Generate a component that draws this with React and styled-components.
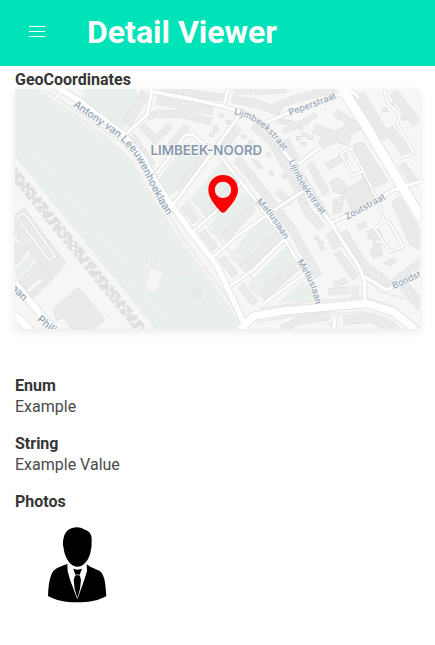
import React from "react";
import styled, { createGlobalStyle } from "styled-components";

const GlobalStyle = createGlobalStyle`
  *, *::before, *::after { box-sizing: border-box; }
  body {
    margin: 0;
    background: #ffffff;
    color: #4a4a4a;
    font-family: Roboto, "Liberation Sans", sans-serif;
    font-size: 16px;
    line-height: 21px;
  }
`;

const Header = styled.header`
  display: flex;
  align-items: center;
  height: 66px;
  padding: 0 25px 2px;
  gap: 38px;
  background: #00e2b7;
  color: #ffffff;
`;

const MenuButton = styled.button`
  display: flex;
  flex-direction: column;
  align-items: center;
  justify-content: center;
  gap: 4px;
  width: 24px;
  height: 24px;
  padding: 0 0 2px;
  border: 0;
  background: transparent;
  color: inherit;
  cursor: pointer;
`;

const MenuLine = styled.span`
  width: 16px;
  height: 1px;
  background: currentColor;
`;

const Title = styled.h1`
  margin: 0;
  font-size: 32px;
  font-weight: 700;
  line-height: 36px;
`;

const Content = styled.main`
  padding: 4px 15px 24px;
`;

const Field = styled.section`
  margin-bottom: ${(p) => (p.$spacious ? 46 : 16)}px;
`;

const Label = styled.h2`
  margin: 0;
  color: #363636;
  font-size: 16px;
  font-weight: 700;
  line-height: ${(p) => (p.$tight ? 19 : 21)}px;
`;

const Value = styled.p`
  margin: 0;
`;

const MapFrame = styled.div`
  height: 240px;
  overflow: hidden;
  background: #f6f6f4;
  box-shadow: 0 3px 8px rgba(0, 0, 0, 0.09);
`;

const MapDrawing = styled.svg`
  display: block;
  width: 100%;
  height: 100%;
`;

const StreetName = styled.text`
  fill: #93a5b5;
  stroke: #fafafa;
  stroke-width: 4px;
  paint-order: stroke;
  font-family: Inter, "Open Sans", sans-serif;
  font-size: ${(p) => (p.$large ? 31 : 27)}px;
  font-weight: 500;
`;

const DistrictName = styled.text`
  fill: #8799ac;
  stroke: #f8f8f8;
  stroke-width: 5px;
  paint-order: stroke;
  font-family: Inter, "Open Sans", sans-serif;
  font-size: 40px;
  font-weight: 600;
  text-anchor: middle;
`;

const PhotoDrawing = styled.svg`
  display: block;
  width: 100px;
  height: 100px;
  margin: 3px 0 0 15px;
`;

const parks = [
  "15,12 85,12 190,82 295,157 370,230 440,350 505,455 620,610 690,715 692,732 435,732 340,615 15,215",
  "225,12 375,12 388,42 342,124 318,140 210,52",
  "452,275 528,172 590,192 500,318 478,332 438,292",
  "540,345 636,228 712,290 640,382 590,392",
  "590,430 690,320 745,350 652,462 622,455",
  "655,515 760,390 815,452 720,565 682,538",
  "712,600 835,476 868,532 745,640",
  "802,654 882,588 904,618 915,652",
  "15,555 70,500 82,516 20,592",
];

/* [points, width] */
const roads = [
  ["15,595 60,650 135,740", 20],
  ["15,690 65,740", 22],
  ["130,0 205,46 340,148 400,220 450,312 488,364 550,450 620,540 700,710", 17],
  ["410,-10 425,20 560,45 640,64 710,86 775,130 830,210 862,252 900,330 962,412 1050,550 1064,592 1064,655", 10],
  ["640,64 655,12", 8],
  ["425,20 412,88 350,145", 9],
  ["130,48 150,24", 7],
  ["768,112 840,82 915,58 995,25", 9],
  ["690,88 605,205 515,325 488,360", 9],
  ["440,266 525,150 550,148 570,168 625,205 740,350 825,465 880,555 930,650", 8],
  ["548,440 620,378 692,292", 8],
  ["605,520 675,458 800,370 900,305", 8],
  ["662,602 730,555 822,464", 8],
  ["762,655 890,562", 8],
  ["862,240 925,190", 9],
  ["964,414 1040,378 1150,315 1235,288", 9],
  ["1065,575 1130,615 1240,560", 9],
  ["1040,220 1108,355 1122,408", 5],
  ["1122,408 1095,432 1140,500 1180,485 1140,415 1122,408", 6],
  ["1040,220 1022,190 992,207 1028,272 1060,258", 5],
  ["1120,5 1130,50 1170,90 1162,118 1212,205 1165,220", 6],
  ["1018,12 1045,38", 10],
  ["975,700 970,740", 10],
  ["690,735 730,694 820,678 950,666 1070,655 1150,680 1230,745", 23],
  ["995,8 1072,130 1140,245 1240,410", 28],
];

/* Terraced houses: [points, depth, house length] */
const terraces = [
  ["440,45 610,78", 25, 17],
  ["450,12 640,38", 20, 16],
  ["665,42 740,56 812,82", 24, 14],
  ["670,18 760,18 830,12", 20, 16],
  ["795,65 850,43 975,12", 22, 19],
  ["408,22 348,120", 28, 24],
  ["395,120 435,165 482,122", 20, 18],
  ["410,100 445,82", 18, 18],
  ["440,85 520,88 605,110", 22, 21],
  ["532,122 480,186", 22, 60],
  ["365,152 430,242", 18, 21],
  ["590,205 505,318", 24, 23],
  ["665,180 640,205", 26, 30],
  ["685,125 642,185", 25, 22],
  ["680,220 760,320 845,432 925,574", 24, 16],
  ["730,120 785,170 845,270 890,375 935,430", 24, 17],
  ["825,165 858,228", 24, 16],
  ["900,235 950,328", 22, 18],
  ["868,265 902,320 950,397", 21, 15],
  ["958,442 982,490", 26, 18],
  ["980,500 1038,578", 22, 15],
  ["1035,600 1035,640", 20, 17],
  ["955,620 1018,615", 20, 18],
  ["972,600 1010,585", 15, 18],
  ["1085,555 1140,600 1240,525", 22, 15],
  ["1000,440 1055,530 1105,585", 23, 14],
  ["1170,590 1235,665", 30, 17],
  ["1055,545 1130,600", 20, 16],
  ["800,105 860,120", 14, 13],
  ["820,140 920,90", 14, 14],
  ["1045,28 1125,162", 36, 23],
  ["1150,22 1220,115", 27, 22],
  ["1135,130 1190,205", 28, 20],
  ["1175,238 1215,295", 24, 22],
  ["950,245 1012,210", 20, 24],
  ["910,130 1020,170", 28, 28],
  ["930,180 1060,112", 30, 34],
  ["975,82 1050,130", 22, 20],
  ["845,355 800,318", 19, 19],
  ["520,360 558,410", 22, 60],
  ["575,438 615,492", 21, 65],
  ["635,518 675,572", 21, 66],
  ["692,602 735,655", 21, 66],
  ["582,390 685,292", 24, 35],
  ["640,462 730,365", 25, 22],
  ["695,552 812,450", 26, 25],
  ["755,635 858,545", 26, 25],
  ["878,705 960,690", 26, 20],
  ["1000,705 1085,700 1155,732", 27, 20],
  ["815,732 880,700", 22, 18],
];

const blocks = [
  "15,390 42,368 168,535 128,580 15,450",
  "30,585 88,526 128,582 50,655 15,615",
  "128,675 205,607 285,703 250,732 185,732 160,698 140,706",
  "15,470 52,492 30,530 15,540",
  "1030,178 1060,172 1135,290 1068,315",
  "1000,318 1060,280 1100,352 1030,390",
  "1145,350 1170,334 1232,440 1232,495 1200,480",
  "550,612 560,605 575,620 572,640 552,635",
  "610,122 622,122 626,140 610,145",
  "725,222 745,230 760,250 745,250",
  "778,255 790,260 790,274 778,270",
  "960,290 985,278 1010,300 1000,328 970,320",
  "970,360 1000,350 995,380 970,388",
  "1070,438 1105,430 1120,462 1090,468",
  "1080,495 1110,475 1118,510 1090,520",
  "1120,535 1150,518 1160,530 1140,542",
  "915,450 928,458 925,468 913,462",
  "1170,92 1205,78 1208,92 1180,108",
  "815,270 830,265 835,278 820,282",
  "1040,420 1065,408 1070,425 1045,435",
];

const paths = [
  "72,12 200,100 300,178 370,240 435,352 500,462 680,710",
  "100,12 210,84 340,176 390,230 455,352 520,460 698,700",
  "205,95 170,200 136,278 230,400 330,520 450,545 545,570 590,545",
  "82,178 70,205 136,278",
  "330,520 330,550 400,628 485,732",
  "465,390 430,500 400,628",
  "530,345 600,430 690,530 780,650",
  "50,655 125,583 30,450",
  "20,580 80,512",
  "750,670 900,650 1060,638 1140,660 1225,728",
  "740,712 840,695 1060,680 1135,700 1170,732",
  "930,680 960,720 1000,680",
  "1065,575 1110,620 1215,650",
];

const rails = [
  "15,248 415,742",
  "15,261 398,732",
  "15,274 388,732",
  "15,287 377,732",
];

const smallHouses = [
  [635, 92], [655, 112], [665, 135], [700, 155], [722, 172], [745, 205], [775, 210],
  [835, 112], [848, 130], [870, 130], [890, 112], [865, 160], [882, 150], [900, 158],
  [1125, 75], [1145, 60], [975, 350], [995, 340], [930, 475], [935, 490],
  [1080, 455], [1095, 480], [1100, 505], [850, 335], [880, 178], [605, 150],
];

const streets = [
  { id: "antony", name: "Antony van Leeuwenhoeklaan", d: "M188,62 C265,119 342,158 380,222 C419,290 444,372 530,465", large: true },
  { id: "lijmbeek-west", name: "Lijmbeekstraat", d: "M671,87 C748,105 783,145 845,232" },
  { id: "lijmbeek-east", name: "Lijmbeekstraat", d: "M836,228 C866,302 897,343 970,434" },
  { id: "peper", name: "Peperstraat", d: "M840,92 C890,72 935,61 1010,25" },
  { id: "zout", name: "Zoutstraat", d: "M1011,405 L1170,318" },
  { id: "metius-north", name: "Metiuslaan", d: "M738,352 C776,385 801,426 850,508" },
  { id: "metius-south", name: "Metiuslaan", d: "M861,530 C887,570 909,605 922,690" },
  { id: "bond", name: "Bondstraat", d: "M1152,612 L1310,539" },
  { id: "philips", name: "Philipsweg", d: "M80,706 L230,828", large: true },
  { id: "laan", name: "aan", d: "M2,612 L70,678", large: true },
];

function MapPin() {
  return (
    <path
      fill="#ff0000"
      fillRule="evenodd"
      d="M639,270 C614,270 595,289 595,314 C595,336 611,356 630,378 Q639,388 648,378 C667,356 684,336 684,314 C684,289 664,270 639,270 Z M639,290 A24.500,24.500 0 1 1 638.900,290 Z"
    />
  );
}

function StreetMap() {
  return (
    <MapDrawing viewBox="15 12 1215 720" preserveAspectRatio="xMidYMid slice" role="img" aria-label="Map of Limbeek-Noord">
      <rect x="-600" y="12" width="2500" height="720" fill="#f6f6f4" />
      <g fill="#e9f0ec">
        {parks.map((p) => <polygon key={p} points={p} />)}
      </g>
      <polygon points="420,552 456,560 440,620 405,610" fill="#f5f5f3" />
      <g fill="none" strokeLinejoin="round">
        {paths.map((p) => <polyline key={p} points={p} stroke="#f2f2f0" strokeWidth="8" />)}
        {paths.map((p) => <polyline key={p} points={p} stroke="#dcdcdc" strokeWidth="3" strokeDasharray="4 5" />)}
        <polyline points="15,225 428,734" stroke="#f6f6f4" strokeWidth="14" />
        {rails.map((p, i) => (
          <polyline key={p} points={p} stroke="#dadada" strokeWidth="8" strokeDasharray={i % 2 ? "22 9 14 5" : "13 6 26 12"} />
        ))}
        {rails.map((p) => (
          <polyline key={p} points={p} stroke="#f4f4f4" strokeWidth="3" strokeDasharray="3 3" />
        ))}
      </g>
      <g fill="#eaeaea" stroke="#dddddd" strokeWidth="2">
        {blocks.map((p) => <polygon key={p} points={p} />)}
        {smallHouses.map(([x, y]) => <rect key={`${x}-${y}`} x={x - 6} y={y - 6} width="13" height="11" />)}
      </g>
      <g fill="#f7f7f5" stroke="#dddddd" strokeWidth="2">
        <polygon points="47,614 92,577 100,588 57,625" />
      </g>
      <g fill="none">
        {terraces.map(([p, depth]) => <polyline key={p} points={p} stroke="#dedede" strokeWidth={depth + 1} />)}
        {terraces.map(([p, depth, length]) => (
          <polyline key={p} points={p} stroke="#ebebeb" strokeWidth={depth - 2} strokeDasharray={`${length} 1`} />
        ))}
      </g>
      <g fill="none" strokeLinejoin="round">
        <polyline points="20,400 38,385 55,400 135,515 118,526 32,415" stroke="#dddddd" strokeWidth="9" />
        <polyline points="20,400 38,385 55,400 135,515 118,526 32,415" stroke="#ffffff" strokeWidth="5" />
        {roads.map(([p, w]) => <polyline key={p} points={p} stroke="#e1e1e1" strokeWidth={w + 5} />)}
        {roads.map(([p, w]) => <polyline key={p} points={p} stroke="#ffffff" strokeWidth={w} />)}
      </g>
      {streets.map((s) => (
        <g key={s.id}>
          <path id={s.id} d={s.d} fill="none" />
          <StreetName $large={s.large}>
            <textPath href={`#${s.id}`}>{s.name}</textPath>
          </StreetName>
        </g>
      ))}
      <DistrictName x="589" y="211">LIMBEEK-NOORD</DistrictName>
      <MapPin />
    </MapDrawing>
  );
}

function Portrait() {
  return (
    <PhotoDrawing viewBox="0 0 300 300" role="img" aria-label="Person in a suit">
      <path d="M101,100 C97,88 99,77 101,68 C104,53 114,42 127,39 C143,34 157,39 166,45 C180,49 186,61 185,75 C184,85 186,94 183,103 C181,126 168,147 153,153 Q142,158 130,152 C115,145 103,122 101,100 Z" />
      <path d="M112,147 C80,158 72,163 65,176 C57,195 55,216 54,243 C77,256 105,262 142,262 C178,262 208,256 229,243 C227,211 225,183 212,170 C202,163 181,158 170,147 L171,168 L163,194 L142,253 L120,194 L113,168 Z" />
      <path d="M130,161 L142,164 L156,161 L149,179 L153,195 L150,222 L142,249 L134,222 L131,195 L136,179 Z" />
      <path d="M135,181 Q142,177 150,181" fill="none" stroke="#ffffff" strokeWidth="2" />
    </PhotoDrawing>
  );
}

export default function App() {
  return (
    <>
      <GlobalStyle />
      <Header>
        <MenuButton type="button" aria-label="Open menu">
          <MenuLine />
          <MenuLine />
          <MenuLine />
        </MenuButton>
        <Title>Detail Viewer</Title>
      </Header>
      <Content>
        <Field $spacious>
          <Label $tight>GeoCoordinates</Label>
          <MapFrame>
            <StreetMap />
          </MapFrame>
        </Field>
        <Field>
          <Label>Enum</Label>
          <Value>Example</Value>
        </Field>
        <Field>
          <Label>String</Label>
          <Value>Example Value</Value>
        </Field>
        <Field>
          <Label>Photos</Label>
          <Portrait />
        </Field>
      </Content>
    </>
  );
}
